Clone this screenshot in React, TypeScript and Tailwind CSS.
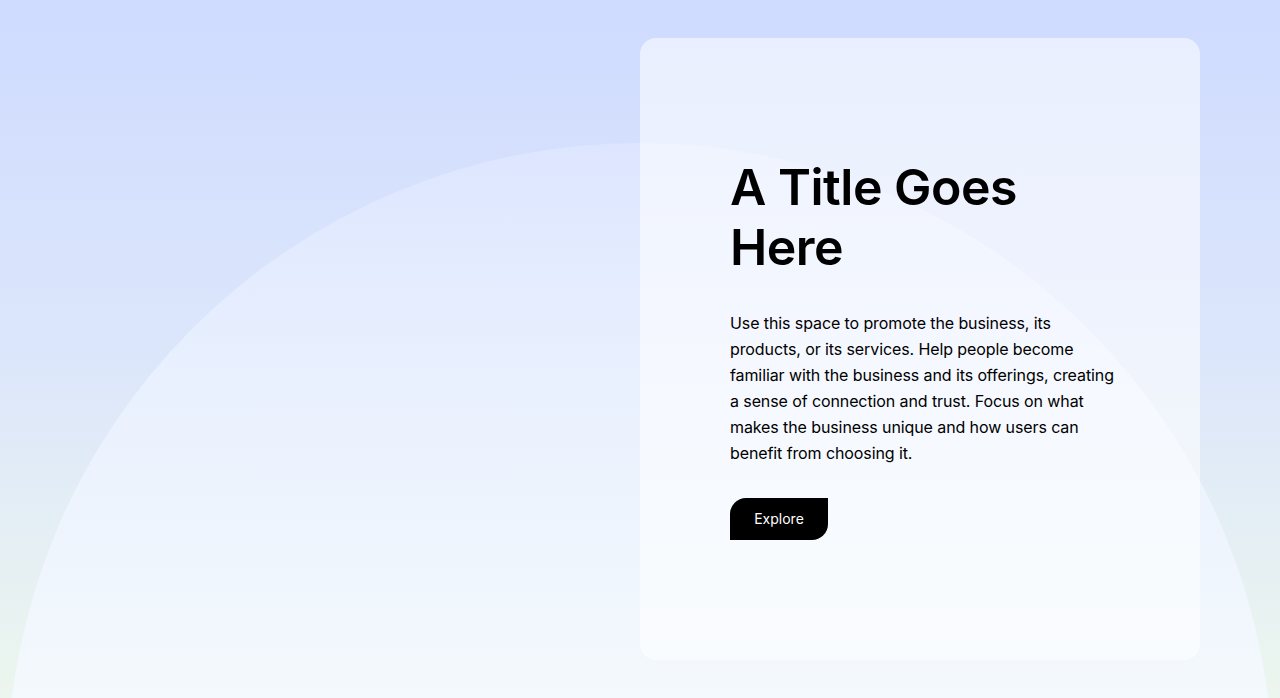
export default function App() {
  return (
    <div
      className="relative h-[698px] w-full overflow-hidden bg-gradient-to-b from-[#cfdbff] via-[#dce6fb] to-[#ecf6ee]"
      style={{ fontFamily: 'Inter, "Noto Sans", sans-serif' }}
    >
      {/* big soft circle behind the card */}
      <div className="absolute left-[7px] top-[143px] h-[1266px] w-[1266px] rounded-full bg-gradient-to-b from-[#dde6ff] from-0% via-[#eaf1fe] via-20% to-[#f3f9fc] to-44%" />

      <div className="relative flex h-full justify-end pr-[80px] pt-[38px]">
        <div className="flex h-[622px] w-[560px] flex-col justify-center rounded-2xl bg-white/55 pl-[90px] pr-[78px]">
          <h1 className="-mt-[2px] text-[50px] font-semibold leading-[60px] tracking-[-0.5px] text-black">
            A Title Goes Here
          </h1>
          <p className="mt-[33px] text-[16px] leading-[26px] tracking-[-0.1px] text-black">
            Use this space to promote the business, its products, or its services. Help people become
            familiar with the business and its offerings, creating a sense of connection and trust.
            Focus on what makes the business unique and how users can benefit from choosing it.
          </p>
          <div className="mt-[32px]">
            <button className="h-[42px] w-[98px] rounded-tl-[16px] rounded-br-[16px] bg-black text-[14px] text-white">
              Explore
            </button>
          </div>
        </div>
      </div>
    </div>
  );
}
